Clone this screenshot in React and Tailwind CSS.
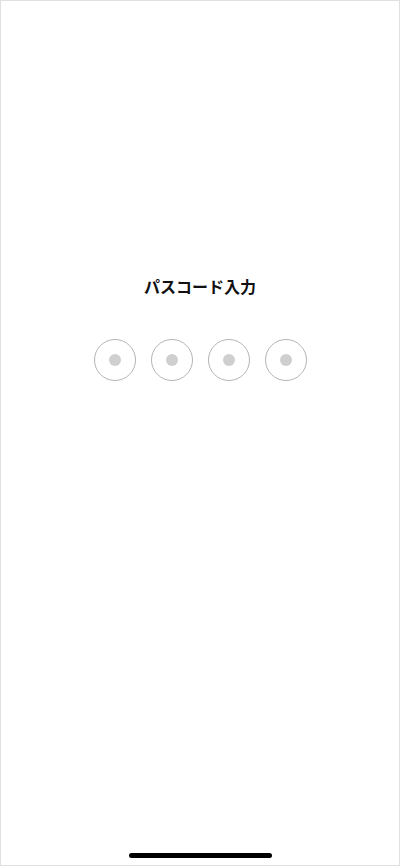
export default function App() {
  const dots = [0, 1, 2, 3];

  return (
    <div
      className="w-[400px] h-[866px] bg-white border border-[#e0e0e0] flex flex-col items-center"
      style={{ fontFamily: '"Noto Sans CJK JP", "Noto Sans", sans-serif' }}
    >
      {/* Title */}
      <h1 className="mt-[273px] text-[16px] leading-[24px] font-bold text-[#111]">パスコード入力</h1>

      {/* Passcode dots */}
      <div className="mt-[41px] flex gap-[15px]">
        {dots.map((d) => (
          <div
            key={d}
            className="w-[42px] h-[42px] rounded-full border border-[#b5b5b5] flex items-center justify-center"
          >
            <div className="w-[12px] h-[12px] rounded-full bg-[#cfcfcf]" />
          </div>
        ))}
      </div>

      {/* Home indicator */}
      <div className="mt-auto mb-[7px] w-[143px] h-[5px] rounded-full bg-black" />
    </div>
  );
}
